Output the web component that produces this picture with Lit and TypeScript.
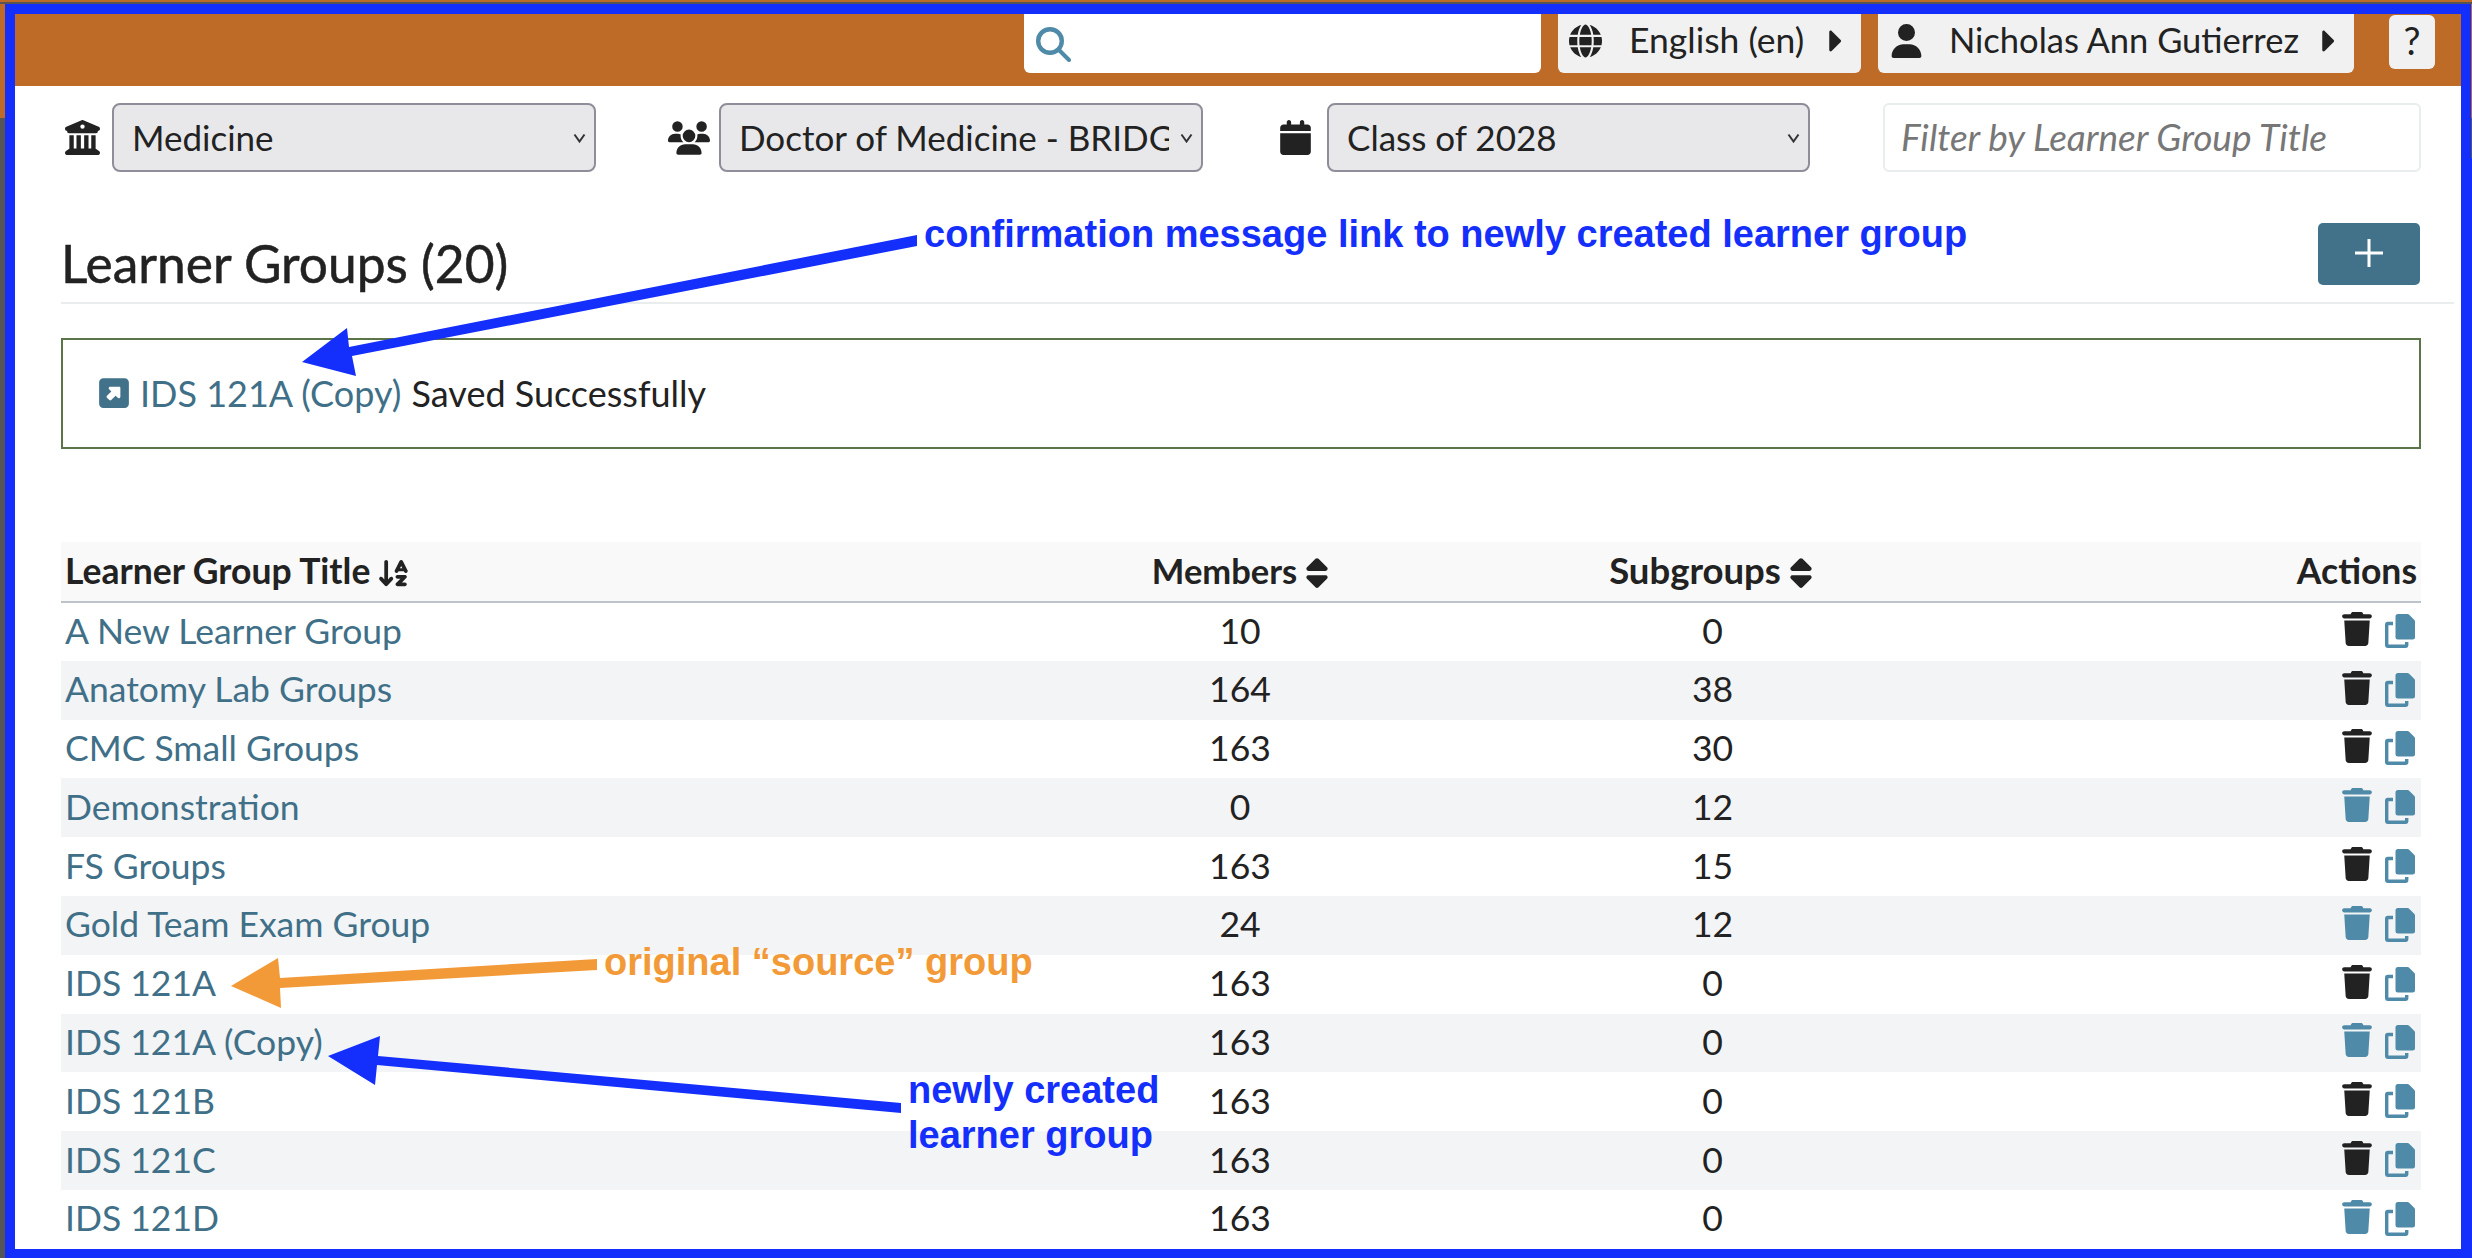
import { LitElement, html, css, svg } from "lit";
import { customElement } from "lit/decorators.js";

const ICONS = {
  globe: ["0 0 512 512", "M352 256c0 22.200-1.200 43.600-3.300 64H163.300c-2.200-20.400-3.300-41.800-3.300-64s1.200-43.600 3.300-64H348.700c2.200 20.400 3.300 41.800 3.300 64zm28.800-64H503.900c5.300 20.500 8.100 41.900 8.100 64s-2.800 43.500-8.100 64H380.800c2.100-20.600 3.200-42 3.200-64s-1.100-43.400-3.200-64zm112.600-32H376.700c-10-63.900-29.800-117.400-55.300-151.600c78.300 20.700 142 77.500 171.900 151.600zm-149.100 0H167.700c6.100-36.400 15.500-68.600 27-94.700c10.500-23.600 22.200-40.700 33.500-51.500C239.400 3.200 248.700 0 256 0s16.600 3.200 27.800 13.800c11.300 10.800 23 27.900 33.500 51.500c11.600 26 20.900 58.200 27 94.700zm-209 0H18.600C48.600 85.900 112.200 29.100 190.600 8.400C165.100 42.600 145.300 96.100 135.300 160zM8.100 192H131.200c-2.100 20.600-3.200 42-3.200 64s1.100 43.400 3.200 64H8.100C2.800 299.500 0 278.100 0 256s2.800-43.500 8.100-64zM194.700 446.600c-11.600-26-20.900-58.200-27-94.600H344.300c-6.100 36.400-15.500 68.600-27 94.600c-10.500 23.600-22.200 40.700-33.500 51.500C272.600 508.800 263.300 512 256 512s-16.600-3.200-27.800-13.800c-11.300-10.800-23-27.900-33.500-51.500zM135.300 352c10 63.900 29.800 117.400 55.300 151.600C112.200 482.900 48.600 426.100 18.600 352H135.300zm358.100 0c-30 74.100-93.600 130.900-171.900 151.600c25.500-34.200 45.200-87.700 55.300-151.600H493.400z"],
  user: ["0 0 448 512", "M224 256A128 128 0 1 0 224 0a128 128 0 1 0 0 256zm-45.700 48C79.800 304 0 383.800 0 482.300C0 498.700 13.300 512 29.700 512H418.300c16.400 0 29.700-13.300 29.700-29.700C448 383.800 368.200 304 269.700 304H178.300z"],
  caret: ["0 0 192 512", "M0 384.662V127.338c0-17.818 21.543-26.741 34.142-14.142l128.662 128.662c7.81 7.81 7.81 20.474 0 28.284L34.142 398.804C21.543 411.404 0 402.48 0 384.662z"],
  landmark: ["0 0 512 512", "M243.4 2.6l-224 96c-14 6-21.8 21-18.7 35.8S16.8 160 32 160v8c0 13.3 10.7 24 24 24H456c13.3 0 24-10.7 24-24v-8c15.2 0 28.3-10.7 31.3-25.6s-4.8-29.9-18.7-35.8l-224-96c-8-3.4-17.2-3.4-25.2 0zM128 224H64V420.3c-.6 .3-1.2 .7-1.8 1.1l-48 32c-11.7 7.8-17 22.4-12.9 35.9S17.9 512 32 512H480c14.1 0 26.5-9.2 30.6-22.7s-1.1-28.1-12.9-35.9l-48-32c-.6-.4-1.2-.7-1.8-1.1V224H384V416H344V224H280V416H232V224H168V416H128V224zM256 64a32 32 0 1 1 0 64 32 32 0 1 1 0-64z"],
  users: ["0 0 640 512", "M144 0a80 80 0 1 1 0 160A80 80 0 1 1 144 0zM512 0a80 80 0 1 1 0 160A80 80 0 1 1 512 0zM0 298.700C0 239.800 47.800 192 106.700 192h42.700c15.900 0 31 3.500 44.600 9.700c-1.300 7.200-1.900 14.700-1.900 22.300c0 38.200 16.800 72.500 43.300 96c-.2 0-.4 0-.7 0H21.300C9.600 320 0 310.400 0 298.700zM405.300 320c-.2 0-.4 0-.7 0c26.600-23.500 43.300-57.800 43.300-96c0-7.600-.7-15-1.900-22.300c13.600-6.300 28.700-9.700 44.600-9.700h42.700C592.200 192 640 239.800 640 298.700c0 11.800-9.600 21.300-21.300 21.300H405.300zM224 224a96 96 0 1 1 192 0 96 96 0 1 1 -192 0zM128 485.300C128 411.700 187.700 352 261.300 352H378.700C452.300 352 512 411.700 512 485.300c0 14.700-11.900 26.700-26.700 26.700H154.700c-14.700 0-26.700-11.900-26.700-26.700z"],
  calendar: ["0 0 448 512", "M96 32V64H48C21.500 64 0 85.500 0 112v48H448V112c0-26.500-21.500-48-48-48H352V32c0-17.700-14.300-32-32-32s-32 14.300-32 32V64H160V32c0-17.700-14.300-32-32-32S96 14.300 96 32zM448 192H0V464c0 26.500 21.500 48 48 48H400c26.500 0 48-21.500 48-48V192z"],
  external: ["0 0 448 512", "M384 32c35.300 0 64 28.700 64 64V416c0 35.300-28.700 64-64 64H64c-35.300 0-64-28.700-64-64V96C0 60.700 28.700 32 64 32H384zM320 313.400V176c0-8.800-7.200-16-16-16H166.600c-12.500 0-22.600 10.100-22.600 22.600c0 6 2.400 11.800 6.600 16L184 232l-66.300 66.300C114 302 112 306.900 112 312s2 10 5.700 13.700l36.700 36.700C158 366 162.900 368 168 368s10-2 13.700-5.700L248 296l33.400 33.400c4.200 4.200 10 6.600 16 6.600C309.900 336 320 325.900 320 313.400z"],
  sort: ["0 0 320 512", "M137.400 41.400c12.500-12.500 32.800-12.500 45.300 0l128 128c9.200 9.200 11.900 22.900 6.900 34.900s-16.600 19.800-29.600 19.800H32c-12.900 0-24.600-7.800-29.600-19.800s-2.200-25.700 6.900-34.900l128-128zm0 429.300l-128-128c-9.200-9.200-11.900-22.900-6.900-34.900s16.600-19.800 29.600-19.800H288c12.900 0 24.600 7.800 29.600 19.800s2.200 25.700-6.900 34.900l-128 128c-12.500 12.500-32.800 12.500-45.300 0z"],
  sortAlpha: ["40 0 490 512", "M183.600 469.600C177.500 476.200 169 480 160 480s-17.500-3.800-23.600-10.400l-88-96c-11.900-13-11.100-33.300 2-45.200s33.300-11.100 45.200 2L128 365.700V64c0-17.700 14.300-32 32-32s32 14.300 32 32V365.700l32.400-35.400c11.900-13 32.200-13.900 45.200-2s13.900 32.200 2 45.200l-88 96zM320 320c0-17.700 14.300-32 32-32H480c12.900 0 24.600 7.800 29.600 19.800s2.200 25.700-6.900 34.900L429.300 416H480c17.700 0 32 14.300 32 32s-14.300 32-32 32H352c-12.900 0-24.600-7.800-29.600-19.800s-2.200-25.700 6.900-34.900L402.700 352H352c-17.700 0-32-14.300-32-32zM416 32c12.100 0 23.200 6.800 28.600 17.700l64 128 16 32c7.900 15.800 1.500 35-14.300 42.900s-35 1.500-42.900-14.300L460.200 224H371.800l-7.200 14.300c-7.900 15.800-27.100 22.200-42.900 14.300s-22.200-27.100-14.300-42.900l16-32 64-128C392.800 38.800 403.900 32 416 32zM395.800 176h40.400L416 135.600 395.800 176z"],
  trash: ["0 0 448 512", "M135.200 17.700L128 32H32C14.300 32 0 46.300 0 64S14.300 96 32 96H416c17.700 0 32-14.300 32-32s-14.300-32-32-32H320l-7.200-14.300C307.400 6.800 296.300 0 284.200 0H163.800c-12.100 0-23.200 6.800-28.600 17.700zM416 128H32L53.200 467c1.600 25.300 22.600 45 47.900 45H346.900c25.300 0 46.300-19.700 47.900-45L416 128z"],
};

type IconName = keyof typeof ICONS;

const icon = (name: IconName, cls: string) => {
  const [box, d] = ICONS[name];
  return html`<svg class=${cls} viewBox=${box} fill="currentColor" aria-hidden="true"><path d=${d}></path></svg>`;
};

const copyIcon = html`<svg class="ic-copy" viewBox="0 0 30 34" aria-hidden="true">
  <path fill="currentColor" d="M13 0h9.500a2 2 0 0 1 1.400.6l5.500 5.500a2 2 0 0 1 .6 1.400V23a2.500 2.500 0 0 1-2.500 2.500H13a2.500 2.500 0 0 1-2.500-2.500V2.500A2.500 2.500 0 0 1 13 0z"></path>
  <path fill="none" stroke="currentColor" stroke-width="3.400" d="M8 9.500H2.900a1.200 1.200 0 0 0-1.200 1.200V31a1.300 1.300 0 0 0 1.300 1.300h17.500a1.200 1.200 0 0 0 1.200-1.200V28"></path>
</svg>`;

const ROWS: [string, number, number, boolean][] = [
  ["A New Learner Group", 10, 0, false],
  ["Anatomy Lab Groups", 164, 38, false],
  ["CMC Small Groups", 163, 30, false],
  ["Demonstration", 0, 12, true],
  ["FS Groups", 163, 15, false],
  ["Gold Team Exam Group", 24, 12, true],
  ["IDS 121A", 163, 0, false],
  ["IDS 121A (Copy)", 163, 0, true],
  ["IDS 121B", 163, 0, false],
  ["IDS 121C", 163, 0, false],
  ["IDS 121D", 163, 0, true],
];

@customElement("app-root")
export class AppRoot extends LitElement {
  static styles = css`
    :host {
      display: block;
      width: 2472px;
      height: 1258px;
      overflow: hidden;
      font-family: Lato, "Liberation Sans", sans-serif;
      color: #222;
    }

    * {
      box-sizing: border-box;
    }

    .shot {
      position: relative;
      width: 2472px;
      height: 1258px;
      padding: 4px 1px 0 5px;
      background:
        linear-gradient(#142ffb, #142ffb) right bottom / 1px 1100px no-repeat,
        linear-gradient(#bd6b27 2px, #555 2px, #555 4px, #bd6b27 4px, #bd6b27 118px, #555 118px);
    }

    .frame {
      height: 1254px;
      border: 10px solid #142ffb;
      border-bottom-width: 9px;
      background: #fff;
      overflow: hidden;
    }

    /* top bar */
    .topbar {
      height: 72px;
      background: #bd6b27;
      display: flex;
      justify-content: flex-end;
      align-items: flex-start;
      padding-right: 26px;
    }

    .search {
      width: 517px;
      height: 59px;
      background: #fff;
      border-radius: 0 0 6px 6px;
      padding: 13px 0 0 12px;
      color: #4f8aa8;
    }

    .ic-search {
      display: block;
      width: 35px;
      height: 35px;
    }

    .menu {
      height: 59px;
      margin-left: 17px;
      padding-bottom: 6px;
      background: #f1f1f1;
      border-radius: 0 0 6px 6px;
      display: flex;
      align-items: center;
      font-size: 35.500px;
      line-height: 40px;
    }

    .menu.lang {
      width: 303px;
      padding-left: 11px;
    }

    .menu.person {
      width: 476px;
      padding-left: 12px;
      font-size: 34.500px;
    }

    .ic-menu {
      width: 33px;
      height: 34px;
      flex: none;
    }

    .menu span {
      flex: 1;
      padding: 0 0 2px 27px;
      white-space: nowrap;
    }

    .person span {
      padding-left: 26px;
    }

    .ic-caret {
      width: 14px;
      height: 36px;
      flex: none;
      margin-right: 18px;
    }

    .help {
      width: 46px;
      height: 54px;
      margin: 1px 0 0 35px;
      background: #f1f1f1;
      border-radius: 6px;
      font-size: 38px;
      line-height: 50px;
      text-align: center;
    }

    /* filters */
    .filters {
      display: flex;
      align-items: center;
      padding: 17px 0 0 50px;
      color: #222;
    }

    .filter {
      display: flex;
      align-items: center;
    }

    .filter + .filter {
      margin-left: 72px;
    }

    .filter.cal {
      margin-left: 77px;
    }

    .ic-landmark {
      width: 35px;
      height: 35px;
      margin-right: 12px;
    }

    .ic-users {
      width: 42px;
      height: 34px;
      margin-right: 9px;
    }

    .ic-cal {
      width: 31px;
      height: 35px;
      margin-right: 16px;
    }

    .select-wrap {
      position: relative;
      width: 484px;
      height: 69px;
    }

    .cal .select-wrap {
      width: 483px;
    }

    select {
      appearance: none;
      width: 100%;
      height: 100%;
      background: #e8e8ea;
      border: 2px solid #8f8d99;
      border-radius: 8px;
      padding: 0 32px 2px 18px;
      font: inherit;
      font-size: 35px;
      color: #222;
    }

    .chev {
      position: absolute;
      right: 10px;
      top: 30px;
      width: 13px;
      height: 10px;
      color: #333;
    }

    .filter-input {
      width: 538px;
      height: 69px;
      margin-left: 73px;
      border: 2px solid #e9eded;
      border-radius: 6px;
      padding: 0 16px 3px;
      font: italic 37px Lato, "Liberation Sans", sans-serif;
      color: #222;
    }

    .filter-input::placeholder {
      color: #777;
      opacity: 1;
    }

    /* heading */
    .heading {
      display: flex;
      justify-content: space-between;
      align-items: flex-start;
      width: 2393px;
      margin: 51px 0 0 46px;
      height: 81px;
      padding-right: 34px;
      border-bottom: 2px solid #e9eded;
    }

    h1 {
      margin: 0;
      padding-top: 12px;
      font-size: 51.500px;
      line-height: 56px;
      font-weight: 400;
      -webkit-text-stroke: 0.5px #222;
    }

    .add {
      width: 102px;
      height: 62px;
      border-radius: 5px;
      background: #41728a;
      color: #fff;
      display: flex;
      align-items: center;
      justify-content: center;
      border: 0;
      padding: 0 0 2px;
    }

    .ic-plus {
      width: 28px;
      height: 28px;
    }

    /* confirmation */
    .alert {
      width: 2360px;
      height: 111px;
      margin: 34px 0 0 46px;
      border: 2px solid #5b7548;
      padding: 0 0 2px 36px;
      display: flex;
      align-items: center;
      font-size: 36px;
      gap: 11px;
    }

    .ic-ext {
      width: 30px;
      height: 34px;
      color: #41728a;
    }

    .alert a,
    td a {
      color: #3f7088;
      text-decoration: none;
    }

    .saved {
      margin-left: 1px;
    }

    /* table */
    table {
      width: 2360px;
      margin: 93px 0 0 46px;
      border-collapse: collapse;
      table-layout: fixed;
      font-size: 35.500px;
    }

    .c-title {
      width: 939px;
    }

    .c-mem {
      width: 480px;
    }

    .c-sub {
      width: 465px;
    }

    th {
      height: 60px;
      background: #f9f9f9;
      border-bottom: 2px solid #bdc3c7;
      font-weight: 700;
      font-size: 35.500px;
      padding: 0 4px 3px;
      text-align: center;
      color: #222;
    }

    th.members {
      font-size: 34.500px;
    }

    th.subgroups {
      font-size: 36.500px;
      padding-right: 8px;
    }

    th.left,
    td.left {
      text-align: left;
    }

    th.right,
    td.right {
      text-align: right;
    }

    td {
      height: 58.800px;
      padding: 0 4px 3px;
      text-align: center;
    }

    tbody tr:nth-child(even) {
      background: #f3f4f6;
    }

    .ic-sort {
      width: 22px;
      height: 34px;
      vertical-align: -6px;
      margin-left: 9px;
    }

    .ic-az {
      width: 29px;
      height: 30px;
      vertical-align: -4px;
      margin-left: 9px;
    }

    .acts {
      display: flex;
      justify-content: flex-end;
      align-items: flex-start;
      gap: 13px;
      padding-right: 2px;
      height: 36px;
    }

    .ic-trash {
      width: 30px;
      height: 34px;
      color: #222;
    }

    .ic-trash.free {
      color: #4f8aa8;
    }

    .ic-copy {
      width: 30px;
      height: 34px;
      margin-top: 2px;
      color: #4f8aa8;
    }

    /* annotations drawn over the page */
    .overlay {
      position: absolute;
      left: 0;
      top: 0;
      width: 2472px;
      height: 1258px;
      pointer-events: none;
    }

    .note {
      position: absolute;
      font: 700 38px/45px "Liberation Sans", Arial, sans-serif;
      color: #142ffb;
      white-space: nowrap;
    }

    .note.orange {
      color: #f39a38;
    }

    .n-confirm {
      left: 924px;
      top: 212px;
    }

    .n-source {
      left: 604px;
      top: 940px;
    }

    .n-new {
      left: 908px;
      top: 1068px;
    }

    .n-learner {
      left: 908px;
      top: 1113px;
    }
  `;

  private renderRow([title, members, subs, free]: [string, number, number, boolean]) {
    return html`<tr>
      <td class="left"><a href="#">${title}</a></td>
      <td>${members}</td>
      <td>${subs}</td>
      <td class="right">
        <div class="acts">${icon("trash", free ? "ic-trash free" : "ic-trash")}${copyIcon}</div>
      </td>
    </tr>`;
  }

  render() {
    return html`
      <div class="shot">
        <div class="frame">
          <header class="topbar">
            <div class="search">
              <svg class="ic-search" viewBox="0 0 35 35" fill="none" stroke="currentColor" aria-hidden="true">
                <circle cx="14" cy="14" r="11.800" stroke-width="4.400"></circle>
                <path d="M22.500 22.500L33 33" stroke-width="4" stroke-linecap="round"></path>
              </svg>
            </div>
            <div class="menu lang">
              ${icon("globe", "ic-menu")}<span>English (en)</span>${icon("caret", "ic-caret")}
            </div>
            <div class="menu person">
              ${icon("user", "ic-menu")}<span>Nicholas Ann Gutierrez</span>${icon("caret", "ic-caret")}
            </div>
            <div class="help">?</div>
          </header>

          <div class="filters">
            <div class="filter">
              ${icon("landmark", "ic-landmark")}
              <div class="select-wrap">
                <select><option>Medicine</option></select>${this.chevron()}
              </div>
            </div>
            <div class="filter">
              ${icon("users", "ic-users")}
              <div class="select-wrap">
                <select><option>Doctor of Medicine - BRIDGES</option></select>${this.chevron()}
              </div>
            </div>
            <div class="filter cal">
              ${icon("calendar", "ic-cal")}
              <div class="select-wrap">
                <select><option>Class of 2028</option></select>${this.chevron()}
              </div>
            </div>
            <input class="filter-input" placeholder="Filter by Learner Group Title" />
          </div>

          <div class="heading">
            <h1>Learner Groups (20)</h1>
            <button class="add">
              <svg class="ic-plus" viewBox="0 0 28 28" stroke="currentColor" stroke-width="3" aria-hidden="true">
                <path d="M14 0v28M0 14h28"></path>
              </svg>
            </button>
          </div>

          <div class="alert">
            ${icon("external", "ic-ext")}
            <span><a href="#">IDS 121A (Copy)</a> <span class="saved">Saved Successfully</span></span>
          </div>

          <table>
            <colgroup>
              <col class="c-title" /><col class="c-mem" /><col class="c-sub" /><col />
            </colgroup>
            <thead>
              <tr>
                <th class="left">Learner Group Title${icon("sortAlpha", "ic-az")}</th>
                <th class="members">Members${icon("sort", "ic-sort")}</th>
                <th class="subgroups">Subgroups${icon("sort", "ic-sort")}</th>
                <th class="right">Actions</th>
              </tr>
            </thead>
            <tbody>
              ${ROWS.map((r) => this.renderRow(r))}
            </tbody>
          </table>
        </div>

        <div class="overlay">
          <svg width="2472" height="1258" viewBox="0 0 2472 1258" aria-hidden="true">
            ${svg`
              <polygon fill="#142ffb" points="917,235 917,246 352,356 356,376 302,362 347,328 349,347"></polygon>
              <polygon fill="#f39a38" points="597,959 597,970 280,988 281,1008 231,986 278,958 280,978"></polygon>
              <polygon fill="#142ffb" points="901,1103 901,1113 377,1065 375,1085 328,1056 380,1036 378,1056"></polygon>
            `}
          </svg>
          <div class="note n-confirm">confirmation message link to newly created learner group</div>
          <div class="note orange n-source">original “source” group</div>
          <div class="note n-new">newly created</div>
          <div class="note n-learner">learner group</div>
        </div>
      </div>
    `;
  }

  private chevron() {
    return html`<svg class="chev" viewBox="0 0 13 10" fill="none" stroke="currentColor" stroke-width="2" aria-hidden="true">
      <path d="M1.500 1.500L6.500 8.500L11.500 1.500"></path>
    </svg>`;
  }
}

declare global {
  interface HTMLElementTagNameMap {
    "app-root": AppRoot;
  }
}
